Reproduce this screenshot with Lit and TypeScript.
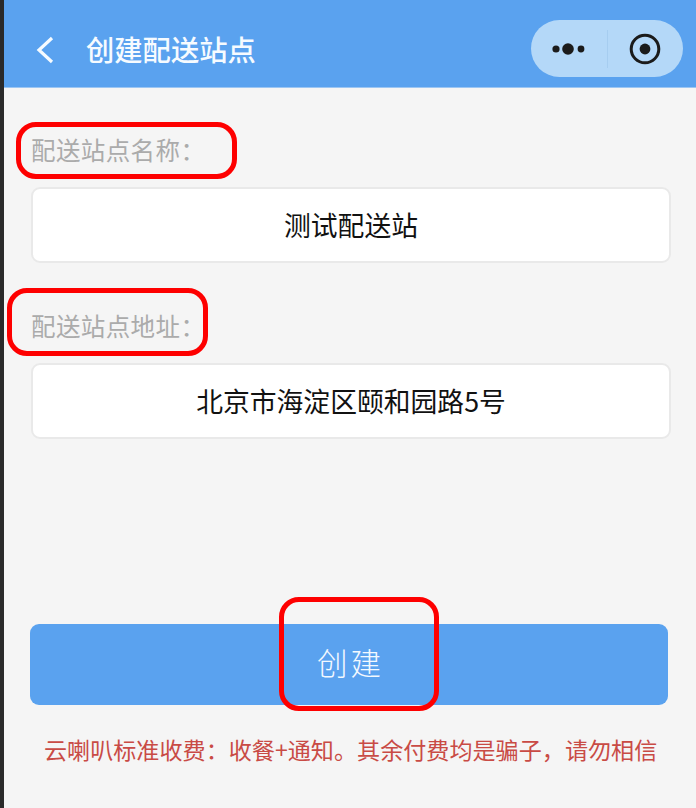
import { LitElement, html, css } from "lit";
import { customElement } from "lit/decorators.js";

@customElement("app-root")
export class AppRoot extends LitElement {
  static styles = css`
    :host {
      display: block;
      position: relative;
      width: 696px;
      height: 808px;
      overflow: hidden;
      background: #f5f5f5;
      font-family: "Noto Sans CJK SC", sans-serif;
    }
    .page {
      display: flex;
      height: 100%;
    }
    .strip {
      flex: 0 0 4px;
      background: #2a2a2a;
    }
    .main {
      flex: 1;
      display: flex;
      flex-direction: column;
      min-width: 0;
    }
    header {
      flex: 0 0 88px;
      display: flex;
      align-items: center;
      background: #5aa2ef;
      border-bottom: 1px solid #9cc6f3;
      box-sizing: border-box;
      padding: 10px 13px 0 31px;
      color: #fff;
    }
    .back {
      display: block;
      width: 20px;
      height: 30px;
      margin-top: 3px;
    }
    .title {
      margin-left: 31px;
      font-size: 28.3px;
      font-weight: 500;
      flex: 1;
      color: #f6fbff;
      line-height: 40px;
    }
    .capsule {
      width: 152px;
      height: 57px;
      border-radius: 29px;
      background: #b4d8f8;
      display: flex;
      align-items: center;
    }
    .capsule svg {
      display: block;
    }
    .divider {
      width: 1px;
      height: 38px;
      background: #a6cdf0;
    }
    .cell {
      flex: 1;
      display: flex;
      align-items: center;
      justify-content: center;
    }
    .content {
      flex: 1;
      display: flex;
      flex-direction: column;
      padding: 44px 25px 0 27px;
    }
    .label {
      font-size: 24.5px;
      line-height: 36px;
      color: #ababab;
      letter-spacing: 0.4px;
    }
    .input {
      margin-top: 19px;
      height: 76px;
      width: 640px;
      box-sizing: border-box;
      padding-bottom: 2px;
      background: #fff;
      border: 2px solid #e9e9e9;
      border-radius: 9px;
      display: flex;
      align-items: center;
      justify-content: center;
      font-size: 26.8px;
      color: #111;
    }
    .input + .label {
      margin-top: 45px;
    }
    .submit {
      margin: 185px 0 0 -1px;
      width: 638px;
      height: 81px;
      box-sizing: border-box;
      padding: 0 0 6px 3px;
      border-radius: 9px;
      background: #5aa2ef;
      display: flex;
      align-items: center;
      justify-content: center;
      color: #f3f9ff;
      font-size: 30.5px;
      font-weight: 300;
      letter-spacing: 3px;
    }
    .notice {
      margin: 27px 0 0 13px;
      font-size: 23.1px;
      line-height: 34px;
      color: #c94b45;
      white-space: nowrap;
    }
    .ring {
      position: absolute;
      box-sizing: border-box;
      border: 5.5px solid #fe0000;
      border-radius: 20px;
      pointer-events: none;
    }
    .r1 {
      left: 16px;
      top: 122px;
      width: 221px;
      height: 57px;
    }
    .r2 {
      left: 7px;
      top: 288px;
      width: 201px;
      height: 68px;
    }
    .r3 {
      left: 279px;
      top: 597px;
      width: 160px;
      height: 114px;
    }
  `;

  render() {
    return html`
      <div class="page">
        <div class="strip"></div>
        <div class="main">
          <header>
            <svg class="back" viewBox="0 0 20 30" fill="none">
              <path d="M17 3 L4 15 L17 27" stroke="#f6fbff" stroke-width="3.2" />
            </svg>
            <div class="title">创建配送站点</div>
            <div class="capsule">
              <div class="cell">
                <svg width="34" height="14" viewBox="0 0 34 14">
                  <circle cx="4" cy="7" r="3.6" fill="#1b1b1b" />
                  <circle cx="16" cy="7" r="5.8" fill="#1b1b1b" />
                  <circle cx="29" cy="7" r="3.4" fill="#1b1b1b" />
                </svg>
              </div>
              <div class="divider"></div>
              <div class="cell">
                <svg width="32" height="32" viewBox="0 0 32 32" fill="none">
                  <circle cx="16" cy="16" r="13.8" stroke="#1b1b1b" stroke-width="3" />
                  <circle cx="16" cy="16" r="5.4" fill="#1b1b1b" />
                </svg>
              </div>
            </div>
          </header>
          <div class="content">
            <div class="label">配送站点名称${"\uFF1A"}</div>
            <div class="input">测试配送站</div>
            <div class="label">配送站点地址${"\uFF1A"}</div>
            <div class="input">北京市海淀区颐和园路5号</div>
            <div class="submit">创建</div>
            <div class="notice">云喇叭标准收费${"\uFF1A"}收餐+通知。其余付费均是骗子${"\uFF0C"}请勿相信</div>
          </div>
        </div>
      </div>
      <div class="ring r1"></div>
      <div class="ring r2"></div>
      <div class="ring r3"></div>
    `;
  }
}
